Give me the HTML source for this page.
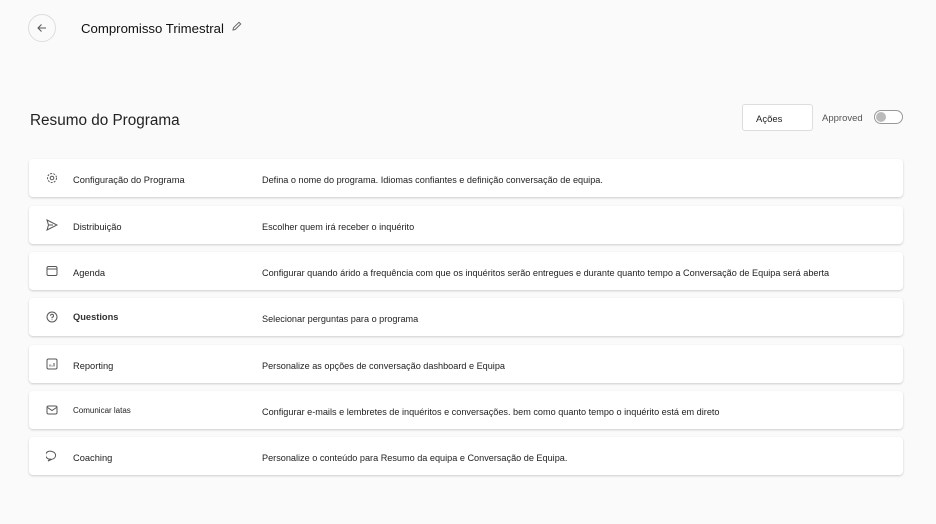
<!DOCTYPE html>
<html><head><meta charset="utf-8"><style>
body{margin:0;width:936px;height:524px;background:#fafafa;font-family:"Liberation Sans",sans-serif;color:#222;position:relative;overflow:hidden}
.back{position:absolute;left:28px;top:14px;width:26px;height:26px;border:1px solid #ddd;border-radius:50%;background:#fafafa}
.back svg{position:absolute;left:7px;top:7px}
.title{position:absolute;left:81px;top:21px;font-size:13.2px;color:#111}
.pen{position:absolute;left:231px;top:21px}
h1{position:absolute;left:30px;top:112px;margin:0;font-weight:normal;font-size:15.3px;color:#222}
.btn{position:absolute;left:742px;top:104px;width:71px;height:27px;border:1px solid #ddd;border-radius:3px;background:#fff;font-size:9.5px;line-height:29px;box-sizing:border-box;padding-left:13px}
.appr{position:absolute;left:822px;top:113px;font-size:9.5px;color:#555}
.tog{position:absolute;left:874px;top:110px;width:29px;height:14px;border:1px solid #999;border-radius:8px;box-sizing:border-box;background:#fff}
.tog:after{content:"";position:absolute;left:1px;top:1px;width:10px;height:10px;border-radius:50%;background:#bbb}
.card{position:absolute;left:29px;width:874px;height:38px;background:#fff;border-radius:4px;box-shadow:0 1px 2px rgba(0,0,0,.18)}
.card svg{position:absolute;left:17px;top:13px}
.lab{position:absolute;left:44px;top:16px;font-size:9.3px;color:#222}
.desc{position:absolute;left:233px;top:16px;font-size:9.15px;color:#222}
</style></head><body>
<div class="back"><svg width="12" height="12" viewBox="0 0 12 12"><path d="M10 6H2M5.5 2.5L2 6l3.5 3.5" fill="none" stroke="#555" stroke-width="1"/></svg></div>
<div class="title">Compromisso Trimestral</div>
<svg class="pen" width="11" height="11" viewBox="0 0 11 11"><path d="M2 9l.5-2.2L8 1.3l1.7 1.7-5.5 5.5z" fill="none" stroke="#666" stroke-width="1"/></svg>
<h1>Resumo do Programa</h1>
<div class="btn">Ações</div>
<div class="appr">Approved</div>
<div class="tog"></div>

<div class="card" style="top:159px"><svg width="12" height="12" viewBox="0 0 12 12"><circle cx="6" cy="6" r="4.5" fill="none" stroke="#555" stroke-dasharray="2 1.2"/><circle cx="6" cy="6" r="1.8" fill="none" stroke="#555"/></svg><div class="lab">Configuração do Programa</div><div class="desc">Defina o nome do programa. Idiomas confiantes e definição conversação de equipa.</div></div>
<div class="card" style="top:206px"><svg width="12" height="12" viewBox="0 0 12 12"><path d="M1 1l10 5-10 5 1.5-5z M2.5 6H7" fill="none" stroke="#555"/></svg><div class="lab">Distribuição</div><div class="desc">Escolher quem irá receber o inquérito</div></div>
<div class="card" style="top:252px"><svg width="12" height="12" viewBox="0 0 12 12"><rect x="1" y="1.5" width="10" height="9" rx="1.5" fill="none" stroke="#555"/><path d="M1 4h10" stroke="#555"/></svg><div class="lab">Agenda</div><div class="desc">Configurar quando árido a frequência com que os inquéritos serão entregues e durante quanto tempo a Conversação de Equipa será aberta</div></div>
<div class="card" style="top:298px"><svg width="12" height="12" viewBox="0 0 12 12"><circle cx="6" cy="6" r="5" fill="none" stroke="#555"/><path d="M4.5 4.7a1.5 1.5 0 1 1 1.5 1.5v1" fill="none" stroke="#555"/><circle cx="6" cy="8.8" r=".5" fill="#555"/></svg><div class="lab" style="font-weight:bold;color:#333;top:14px">Questions</div><div class="desc">Selecionar perguntas para o programa</div></div>
<div class="card" style="top:345px"><svg width="12" height="12" viewBox="0 0 12 12"><rect x="1" y="1" width="10" height="10" rx="1.5" fill="none" stroke="#555"/><path d="M4 8.5V6.5M6 8.5V7.5M8 8.5V5" stroke="#555"/></svg><div class="lab">Reporting</div><div class="desc">Personalize as opções de conversação dashboard e Equipa</div></div>
<div class="card" style="top:391px"><svg width="12" height="12" viewBox="0 0 12 12"><rect x="1" y="2" width="10" height="8" rx="1.5" fill="none" stroke="#555"/><path d="M1.5 3.5L6 6.5l4.5-3" fill="none" stroke="#555"/></svg><div class="lab" style="font-size:8px;top:15px">Comunicar latas</div><div class="desc">Configurar e-mails e lembretes de inquéritos e conversações. bem como quanto tempo o inquérito está em direto</div></div>
<div class="card" style="top:437px"><svg width="12" height="12" viewBox="0 0 12 12"><path d="M6 1.5a4.5 4 0 1 0-2 7.6L2 11l3.5-1.6A4.5 4 0 0 0 6 1.5z" fill="none" stroke="#555"/></svg><div class="lab">Coaching</div><div class="desc">Personalize o conteúdo para Resumo da equipa e Conversação de Equipa.</div></div>
</body></html>
